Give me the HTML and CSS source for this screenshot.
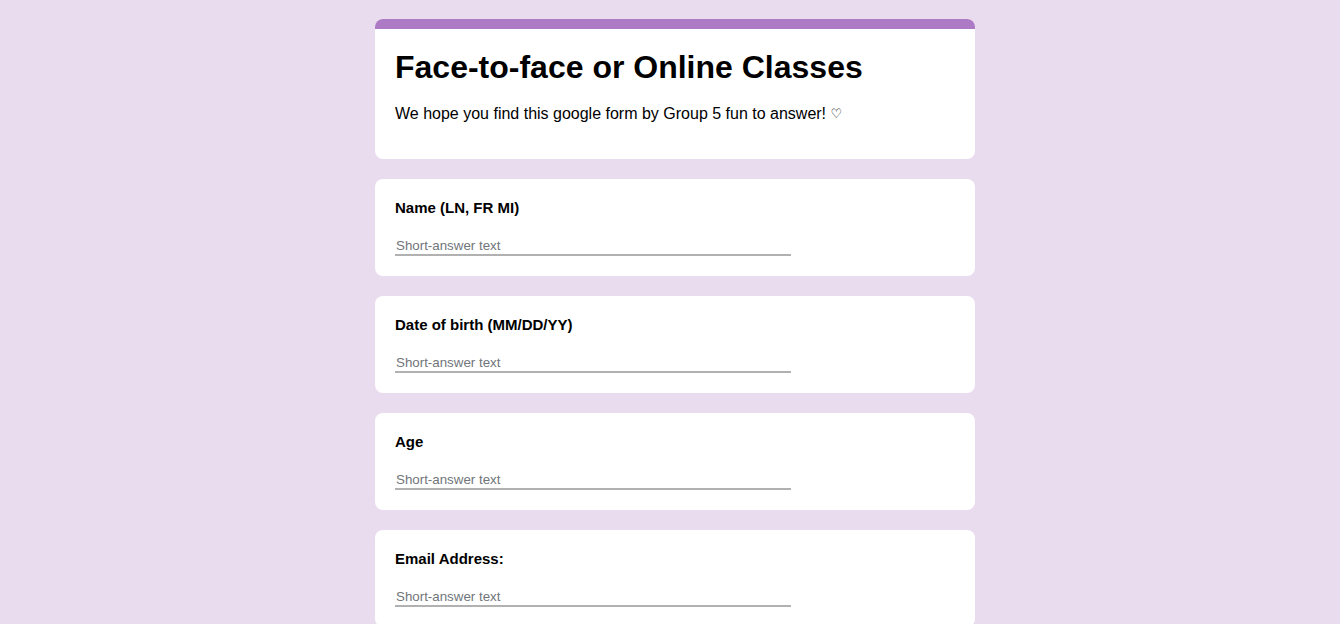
FILE: index.html
```html
<!DOCTYPE html>
<html lang="en">
<head>
<meta charset="utf-8">
<title>Face-to-face or Online Classes</title>
<link rel="stylesheet" href="styles.css">
</head>
<body>
<main class="form">
  <section class="card header-card">
    <div class="accent"></div>
    <div class="header-body">
      <h1 class="title">Face-to-face or Online Classes</h1>
      <p class="desc">We hope you find this google form by Group 5 fun to answer! <span class="heart">♡</span></p>
    </div>
  </section>
  <section class="card question">
    <div class="label">Name (LN, FR MI)</div>
    <div class="answer">Short-answer text</div>
  </section>
  <section class="card question">
    <div class="label">Date of birth (MM/DD/YY)</div>
    <div class="answer">Short-answer text</div>
  </section>
  <section class="card question">
    <div class="label">Age</div>
    <div class="answer">Short-answer text</div>
  </section>
  <section class="card question">
    <div class="label">Email Address:</div>
    <div class="answer">Short-answer text</div>
  </section>
</main>
</body>
</html>
```
FILE: styles.css
```css
html, body {
  margin: 0;
  padding: 0;
}
body {
  background: #eadcef;
  font-family: "Liberation Sans", Arial, sans-serif;
  color: #000;
  padding-left: 10px;
}
.form {
  width: 600px;
  margin: 19px auto 0;
  display: flex;
  flex-direction: column;
  gap: 20px;
}
.card {
  background: #fff;
  border-radius: 8px;
  overflow: hidden;
}
.accent {
  height: 10px;
  background: #ad7ac6;
}
.header-body {
  height: 130px;
  box-sizing: border-box;
  padding: 18px 20px 0;
}
.title {
  margin: 0;
  font-size: 32px;
  line-height: 40px;
  font-weight: 700;
}
.desc {
  margin: 15px 0 0;
  font-size: 16px;
  line-height: 24px;
}
.heart {
  font-family: "DejaVu Sans", sans-serif;
  font-size: 13px;
  vertical-align: 1px;
}
.question {
  height: 97px;
  box-sizing: border-box;
  padding: 19px 20px 0;
}
.label {
  font-size: 15px;
  line-height: 20px;
  font-weight: 700;
}
.answer {
  margin-top: 19px;
  width: 394px;
  padding: 0 1px;
  font-size: 13.33px;
  line-height: 17px;
  color: #70757a;
  border-bottom: 2px solid #b1b1b1;
}
```
